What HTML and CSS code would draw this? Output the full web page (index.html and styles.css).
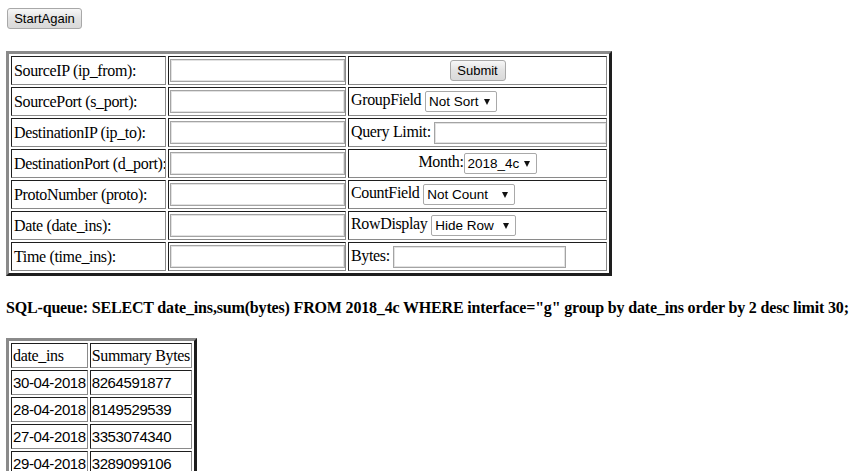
FILE: index.html
```html
<!DOCTYPE html>
<html>
<head>
<meta charset="utf-8">
<title>Query</title>
<link rel="stylesheet" href="styles.css">
</head>
<body>
<div class="page">
  <div class="top"><button class="btn btn-start" type="button">StartAgain</button></div>
  <form class="form">
    <table class="grid form-table">
      <colgroup><col class="c1"><col class="c2"><col class="c3"></colgroup>
      <tr>
        <td>SourceIP (ip_from):</td>
        <td class="inp"><input class="txt" type="text"></td>
        <td class="center"><button class="btn btn-submit" type="button">Submit</button></td>
      </tr>
      <tr>
        <td>SourcePort (s_port):</td>
        <td class="inp"><input class="txt" type="text"></td>
        <td>GroupField <span class="sel w-group">Not Sort</span></td>
      </tr>
      <tr>
        <td>DestinationIP (ip_to):</td>
        <td class="inp"><input class="txt" type="text"></td>
        <td>Query Limit: <input class="txt txt-small" type="text"></td>
      </tr>
      <tr>
        <td>DestinationPort (d_port):</td>
        <td class="inp"><input class="txt" type="text"></td>
        <td class="center">Month:<span class="sel w-month">2018_4c</span></td>
      </tr>
      <tr>
        <td>ProtoNumber (proto):</td>
        <td class="inp"><input class="txt" type="text"></td>
        <td>CountField <span class="sel w-count">Not Count</span></td>
      </tr>
      <tr>
        <td>Date (date_ins):</td>
        <td class="inp"><input class="txt" type="text"></td>
        <td>RowDisplay <span class="sel w-row">Hide Row</span></td>
      </tr>
      <tr>
        <td>Time (time_ins):</td>
        <td class="inp"><input class="txt" type="text"></td>
        <td>Bytes: <input class="txt txt-small" type="text"></td>
      </tr>
    </table>
  </form>
  <h4 class="sql">SQL-queue: SELECT date_ins,sum(bytes) FROM 2018_4c WHERE interface="g" group by date_ins order by 2 desc limit 30;</h4>
  <table class="grid result">
    <tr><td>date_ins</td><td>Summary Bytes</td></tr>
    <tr><td class="num">30-04-2018</td><td class="num">8264591877</td></tr>
    <tr><td class="num">28-04-2018</td><td class="num">8149529539</td></tr>
    <tr><td class="num">27-04-2018</td><td class="num">3353074340</td></tr>
    <tr><td class="num">29-04-2018</td><td class="num">3289099106</td></tr>
  </table>
</div>
</body>
</html>
```
FILE: styles.css
```css
html, body {
  margin: 0;
  padding: 0;
  background: #fff;
}
body {
  font-family: "Liberation Serif", "Times New Roman", serif;
  font-size: 16px;
  letter-spacing: -0.35px;
  color: #000;
}
.page {
  padding: 8px 0 0 6px;
}
.top {
  padding-left: 1px;
  height: 43px;
}
.btn {
  font-family: "Liberation Sans", Arial, sans-serif;
  font-size: 13px;
  letter-spacing: 0;
  color: #000;
  background: linear-gradient(#f7f7f7, #e2e2e2 50%, #d9d9d9);
  border: 1px solid #a8a8a8;
  border-radius: 3px;
  padding: 0;
  margin: 0;
}
.btn-start {
  width: 75px;
  height: 21px;
}
.btn-submit {
  width: 56px;
  height: 21px;
}
.form {
  margin: 0;
}
.grid {
  border-collapse: separate;
  border-spacing: 2px;
  border-style: solid;
  border-width: 3px;
  border-color: #8a8a8a #1e1e1e #1e1e1e #8a8a8a;
}
.grid td {
  border-style: solid;
  border-width: 1px;
  border-color: #1e1e1e #8a8a8a #8a8a8a #1e1e1e;
  box-sizing: border-box;
  padding: 0 2px;
  vertical-align: middle;
  white-space: nowrap;
  overflow: hidden;
}
.form-table {
  table-layout: fixed;
  width: 606px;
}
.form-table td {
  height: 29px;
}
.c1 { width: 155px; }
.c2 { width: 178px; }
.c3 { width: 259px; }
.form-table td.inp {
  padding: 0 1px;
}
.center {
  text-align: center;
}
.txt {
  box-sizing: border-box;
  width: 175px;
  height: 23px;
  margin: 0;
  padding: 1px 2px;
  border: 1px solid #a4a4a4;
  box-shadow: inset 0 0 0 1px #e2e2e2;
  font-family: "Liberation Sans", Arial, sans-serif;
  font-size: 13px;
  vertical-align: middle;
  background: #fff;
}
.txt-small {
  width: 173px;
  height: 22px;
}
.sel {
  position: relative;
  display: inline-block;
  box-sizing: border-box;
  height: 21px;
  line-height: 19px;
  padding: 0 16px 0 3px;
  border: 1px solid #a9a9a9;
  border-radius: 2px;
  background: #fff;
  font-family: "Liberation Sans", Arial, sans-serif;
  font-size: 13.5px;
  letter-spacing: 0;
  text-align: left;
  vertical-align: middle;
}
.sel::after {
  content: "";
  position: absolute;
  right: 6px;
  top: 7px;
  border-left: 3.5px solid transparent;
  border-right: 3.5px solid transparent;
  border-top: 6px solid #111;
}
.w-group { width: 72px; }
.w-month { width: 73px; }
.w-count { width: 92px; }
.w-row { width: 85px; }
.sql {
  margin: 22px 0 0 0;
  font-size: 16px;
  font-weight: bold;
  line-height: 19px;
  letter-spacing: -0.17px;
  white-space: nowrap;
}
.result {
  margin-top: 21px;
}
.result td {
  height: 25px;
  padding: 0 1px;
}
.result td.num {
  font-family: "Liberation Sans", Arial, sans-serif;
  font-size: 15px;
  letter-spacing: -0.4px;
}
```
